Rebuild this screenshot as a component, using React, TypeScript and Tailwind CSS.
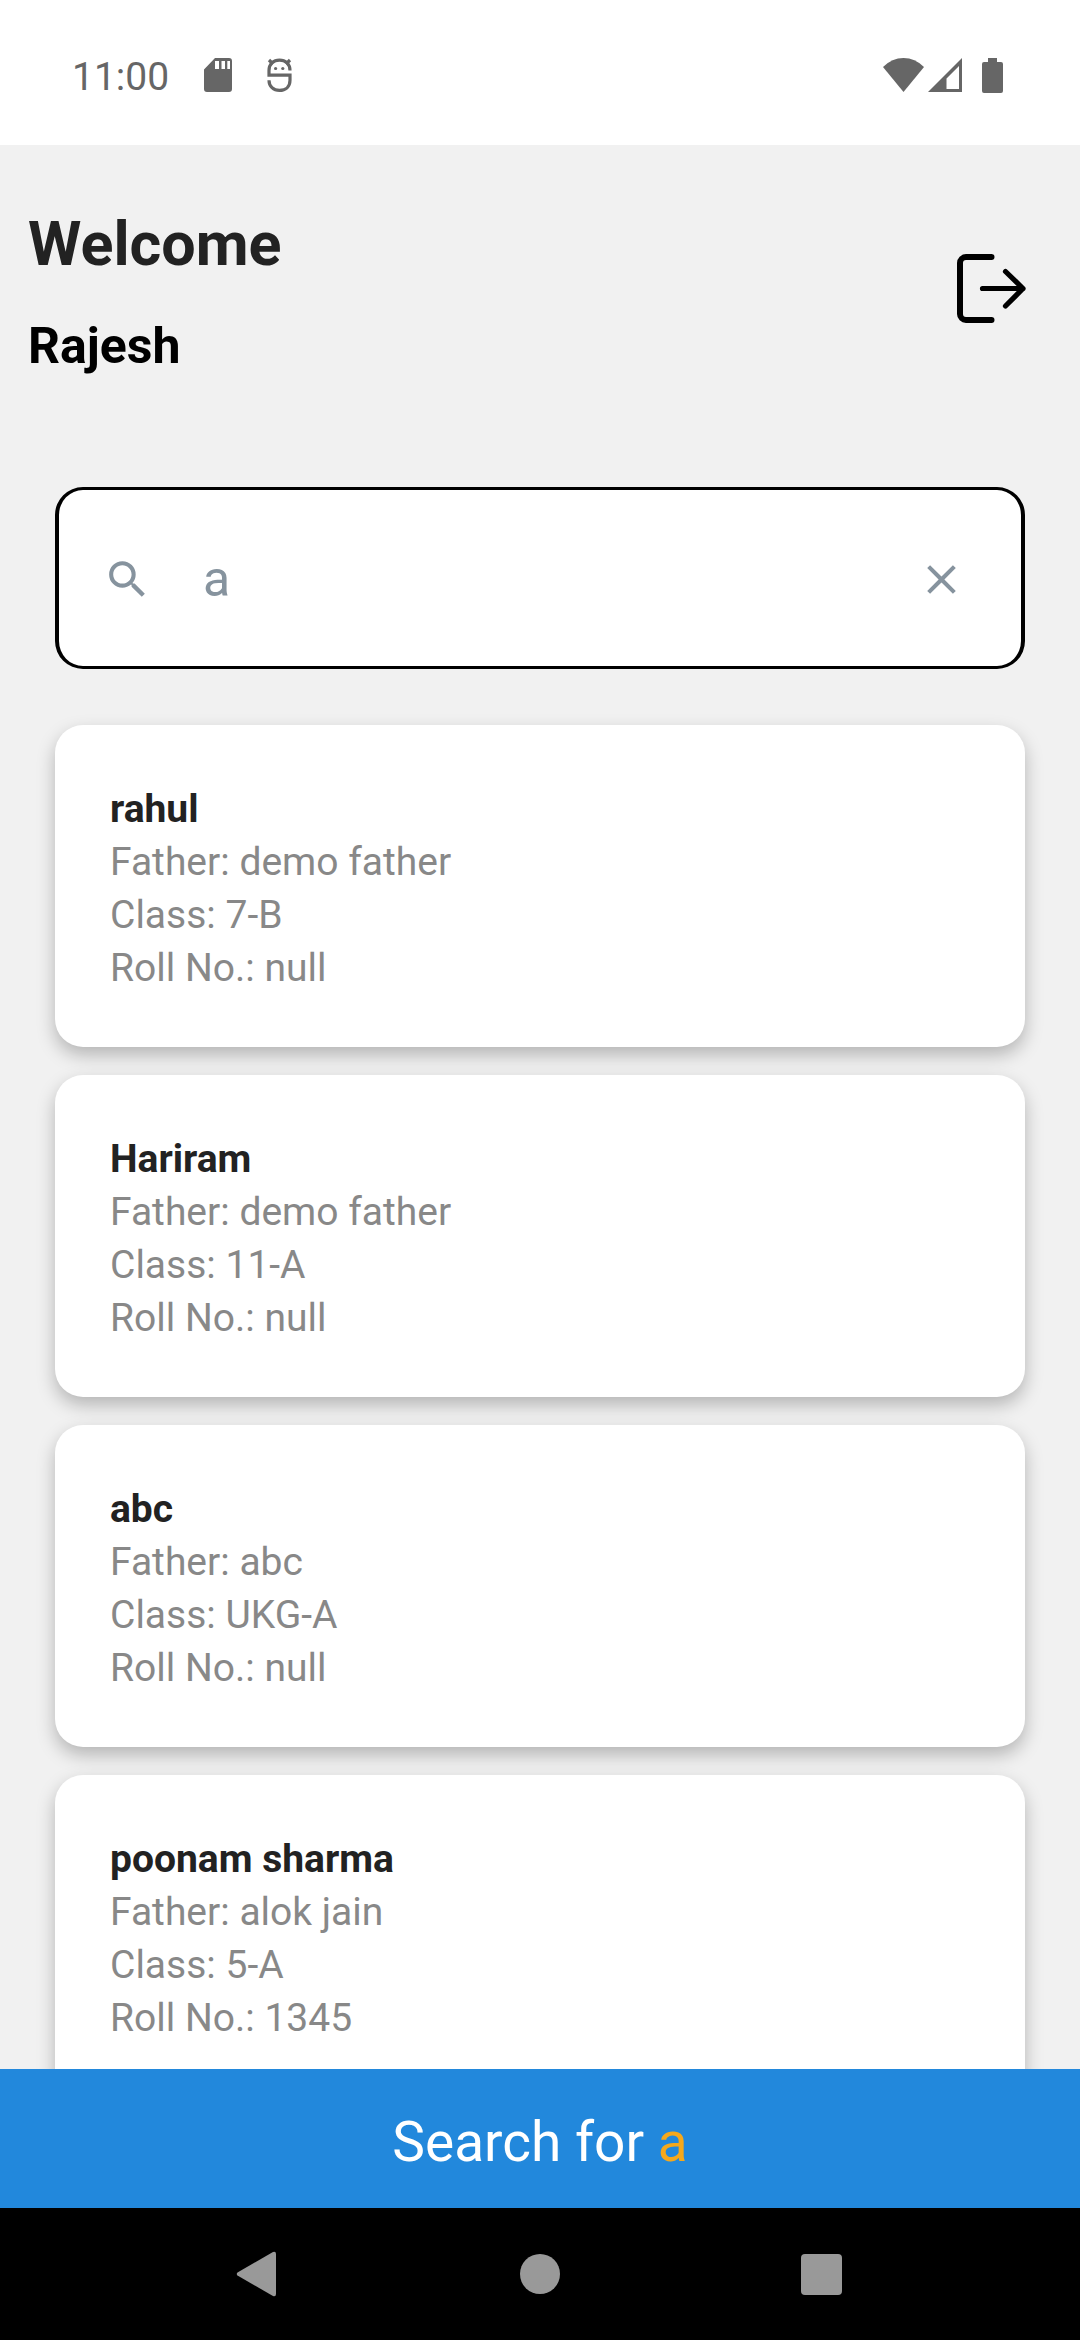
import { useState } from 'react'

type Student = {
  name: string
  father: string
  className: string
  rollNo: string | null
}

const students: Student[] = [
  { name: 'rahul', father: 'demo father', className: '7-B', rollNo: null },
  { name: 'Hariram', father: 'demo father', className: '11-A', rollNo: null },
  { name: 'abc', father: 'abc', className: 'UKG-A', rollNo: null },
  { name: 'poonam sharma', father: 'alok jain', className: '5-A', rollNo: '1345' },
]

const StatusBar = () => (
  <div className="flex h-[145px] shrink-0 items-center justify-between bg-white pt-[5px] pr-[77px] pl-[72px] text-[#666666]">
    <div className="flex items-center">
      <span className="pt-1 text-[39px] leading-[46px]">11:00</span>
      <svg className="ml-[35px] h-[34px] w-7" viewBox="0 0 28 34" fill="currentColor">
        <path
          fillRule="evenodd"
          d="M11 0h14a3 3 0 0 1 3 3v28a3 3 0 0 1-3 3H3a3 3 0 0 1-3-3V11.500zM11 3v8h4V3zM17.500 3v8h3.500V3zM23.300 3v8H26V3z"
        />
      </svg>
      <svg className="ml-[35px] h-[34px] w-[25px]" viewBox="0 0 25 34" fill="none" stroke="currentColor" strokeWidth="3.200">
        <path d="M23 12.500C23 6 18.500 2.200 12.500 2.200S2 6 2 12.500v4.700h21v5c0 6.500-4.500 10.200-10.500 10.200S2 28.500 2 22.200" />
        <path d="M2 2l4 4M23 2l-4 4" />
        <circle cx="8.600" cy="10.500" r="1.600" fill="currentColor" stroke="none" />
        <circle cx="15.800" cy="10.500" r="1.600" fill="currentColor" stroke="none" />
      </svg>
    </div>
    <div className="flex items-center">
      <svg className="h-[34px] w-[41px]" viewBox="0 0 41 34" fill="currentColor">
        <path d="M0 9Q9 0 20.500 0T41 9L20.500 34z" />
      </svg>
      <svg className="ml-1 h-[34px] w-[34px]" viewBox="0 0 34 34" fill="currentColor">
        <path fillRule="evenodd" d="M34 0v34H0zM31 8L18.500 20.500V31H31z" />
      </svg>
      <svg className="ml-5 h-[35px] w-[21px]" viewBox="0 0 21 35" fill="currentColor">
        <path d="M6 0h9v4h4a2 2 0 0 1 2 2v27a2 2 0 0 1-2 2H2a2 2 0 0 1-2-2V6a2 2 0 0 1 2-2h4z" />
      </svg>
    </div>
  </div>
)

const StudentCard = ({ student }: { student: Student }) => (
  <article className="rounded-[28px] bg-white px-[55px] pt-[58px] pb-[52px] text-[39px] leading-[53px] text-[#888888] shadow-[0_8px_18px_rgba(0,0,0,0.25)]">
    <h3 className="font-bold text-[#222222]">{student.name}</h3>
    <p>Father: {student.father}</p>
    <p>Class: {student.className}</p>
    <p>Roll No.: {student.rollNo ?? 'null'}</p>
  </article>
)

const NavigationBar = () => (
  <nav className="flex h-[132px] shrink-0 items-center justify-center gap-[151px] bg-black text-[#999999]">
    <button type="button" aria-label="Back" className="flex w-[130px] justify-center">
      <svg className="h-[46px] w-[46px]" viewBox="0 0 46 46" fill="currentColor">
        <path d="M1.500 21.500L37 1Q40 0 40 3v40q0 3-3 2L1.500 24.500Q0 23 1.500 21.500z" />
      </svg>
    </button>
    <button type="button" aria-label="Home" className="flex w-[130px] justify-center">
      <span className="size-10 rounded-full bg-[#999999]" />
    </button>
    <button type="button" aria-label="Recent apps" className="flex w-[130px] justify-center">
      <span className="size-[41px] rounded bg-[#999999]" />
    </button>
  </nav>
)

export default function App() {
  const [query, setQuery] = useState('a')

  return (
    <div className="flex h-screen flex-col overflow-hidden bg-[#f1f1f1] font-['Roboto',sans-serif]">
      <StatusBar />

      <main className="flex-1 overflow-hidden">
        <header className="flex items-center justify-between pt-14 pr-[54px] pl-7">
          <div className="pt-2">
            <h1 className="text-[61px] leading-[71px] font-bold text-[#222222]">Welcome</h1>
            <h2 className="mt-9 text-[50px] leading-[60px] font-bold text-black">Rajesh</h2>
          </div>
          <button type="button" aria-label="Log out">
            <svg
              className="h-[69px] w-[69px]"
              viewBox="0 0 69 69"
              fill="none"
              stroke="black"
              strokeLinecap="round"
              strokeLinejoin="round"
            >
              <path strokeWidth="6" d="M34.500 3H9a6 6 0 0 0-6 6v51a6 6 0 0 0 6 6h25.500" />
              <path strokeWidth="5.200" d="M25.500 34.500H66M48.500 17.500l17.500 17-17.500 17.500" />
            </svg>
          </button>
        </header>

        <section className="mt-[111px] px-[55px]">
          <div className="flex h-[182px] items-center rounded-[28px] border-x-4 border-y-3 border-black bg-white pt-[3px] pr-[55px] pl-11 text-[#86939e]">
            <label htmlFor="search" aria-label="Search">
              <svg className="size-[49px]" viewBox="0 0 24 24" fill="currentColor">
                <path d="M15.500 14h-.79l-.28-.27A6.471 6.471 0 0 0 16 9.500 6.500 6.500 0 1 0 9.500 16c1.610 0 3.090-.59 4.230-1.570l.27.28v.79l5 4.990L20.490 19l-4.990-5zm-6 0C7.010 14 5 11.990 5 9.500S7.010 5 9.500 5 14 7.010 14 9.500 11.990 14 9.500 14z" />
              </svg>
            </label>
            <input
              id="search"
              type="text"
              value={query}
              onChange={(e) => setQuery(e.target.value)}
              className="ml-[51px] min-w-0 flex-1 text-[50px] leading-[59px] outline-none"
            />
            <button type="button" aria-label="Clear" onClick={() => setQuery('')}>
              <svg className="size-[49px]" viewBox="0 0 24 24" fill="currentColor">
                <path d="M19 6.410L17.590 5 12 10.590 6.410 5 5 6.410 10.590 12 5 17.590 6.410 19 12 13.410 17.590 19 19 17.590 13.410 12z" />
              </svg>
            </button>
          </div>

          <div className="mt-14 flex flex-col gap-7">
            {students.map((student) => (
              <StudentCard key={student.name} student={student} />
            ))}
          </div>
        </section>
      </main>

      <footer className="flex h-[139px] shrink-0 items-center justify-center bg-[#2288dc] pt-2 text-[55px] leading-[65px] text-white">
        <p>
          Search for <span className="text-[#f5a81c]">{query}</span>
        </p>
      </footer>

      <NavigationBar />
    </div>
  )
}
